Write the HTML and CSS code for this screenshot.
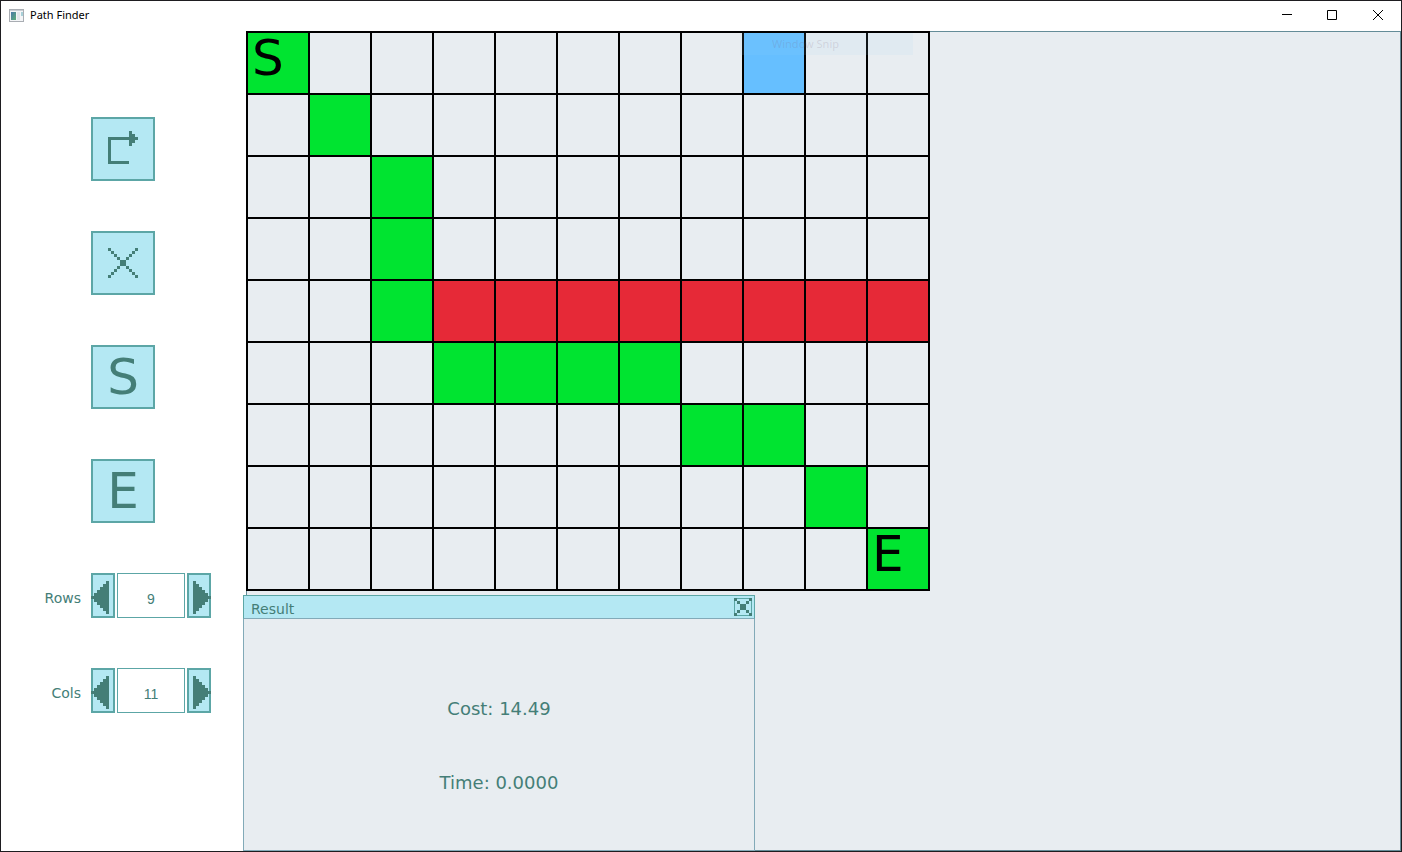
FILE: index.html
```html
<!DOCTYPE html>
<html lang="en">
<head>
<meta charset="utf-8">
<title>Path Finder</title>
<link rel="stylesheet" href="styles.css">
</head>
<body>
<div class="window">
  <header class="titlebar">
    <svg class="app-icon" viewBox="0 0 15 13" width="15" height="13" aria-hidden="true">
      <defs><linearGradient id="pane" x1="0" y1="0" x2="1" y2="1"><stop offset="0" stop-color="#4a78a8"/><stop offset="1" stop-color="#5fae78"/></linearGradient></defs>
      <rect x="0.5" y="0.5" width="14" height="12" fill="#f4f5f7" stroke="#a9adb3"/>
      <rect x="1" y="1" width="13" height="1" fill="#c9cdd3"/>
      <rect x="2" y="3" width="5" height="8" fill="url(#pane)"/>
      <rect x="8" y="3" width="3" height="8" fill="#e3e6ea"/>
      <rect x="12" y="3" width="2" height="4" fill="#a8d0d8"/>
    </svg>
    <h1 class="title">Path Finder</h1>
    <div class="window-buttons">
      <button class="window-button" type="button" aria-label="Minimize"><svg viewBox="0 0 10 10" width="10" height="10"><path d="M0 4.5H10" /></svg></button>
      <button class="window-button" type="button" aria-label="Maximize"><svg viewBox="0 0 10 10" width="10" height="10"><path d="M.5 .5H9.5V9.5H.5Z" /></svg></button>
      <button class="window-button last" type="button" aria-label="Close"><svg viewBox="0 0 10 10" width="10" height="10"><path d="M0 0L10 10M10 0L0 10" /></svg></button>
    </div>
  </header>
  <div class="content">
    <aside class="sidebar">
      <button class="tool" type="button" aria-label="Run">
        <svg class="pixel" viewBox="0 0 16 16" width="48" height="48"><path d="M3 4H10V2H11V3H12V4H13V5H12V6H11V7H10V5H4V12H10V13H3Z"/></svg>
      </button>
      <button class="tool" type="button" aria-label="Clear">
        <svg class="pixel" viewBox="0 0 16 16" width="48" height="48"><path d="M3 3h1v1h1v1h1v1h1v1h2V6h1V5h1V4h1V3h1v1h-1v1h-1v1h-1v1h-1v2h1v1h1v1h1v1h1v1h-1v-1h-1v-1h-1v-1h-1V9H7v1H6v1H5v1H4v1H3v-1h1v-1h1v-1h1V9h1V7H6V6H5V5H4V4H3Z"/></svg>
      </button>
      <button class="tool letter" type="button">S</button>
      <button class="tool letter" type="button">E</button>
      <div class="field">
        <label class="field-label" for="rows">Rows</label>
        <div class="spinner">
          <button class="step left" type="button" aria-label="Fewer rows"><svg class="pixel" viewBox="0 0 6 11" width="18" height="33"><path d="M6 0V11H5V10H4V9H3V8H2V7H1V6H0V5H1V4H2V3H3V2H4V1H5V0Z"/></svg></button>
          <input class="value" id="rows" type="text" value="9">
          <button class="step right" type="button" aria-label="More rows"><svg class="pixel" viewBox="0 0 6 11" width="18" height="33"><path d="M0 0V11H1V10H2V9H3V8H4V7H5V6H6V5H5V4H4V3H3V2H2V1H1V0Z"/></svg></button>
        </div>
      </div>
      <div class="field">
        <label class="field-label" for="cols">Cols</label>
        <div class="spinner">
          <button class="step left" type="button" aria-label="Fewer columns"><svg class="pixel" viewBox="0 0 6 11" width="18" height="33"><path d="M6 0V11H5V10H4V9H3V8H2V7H1V6H0V5H1V4H2V3H3V2H4V1H5V0Z"/></svg></button>
          <input class="value" id="cols" type="text" value="11">
          <button class="step right" type="button" aria-label="More columns"><svg class="pixel" viewBox="0 0 6 11" width="18" height="33"><path d="M0 0V11H1V10H2V9H3V8H4V7H5V6H6V5H5V4H4V3H3V2H2V1H1V0Z"/></svg></button>
        </div>
      </div>
    </aside>
    <main class="canvas">
      <div class="board">
        <i class="cell path">S</i><i class="cell"></i><i class="cell"></i><i class="cell"></i><i class="cell"></i><i class="cell"></i><i class="cell"></i><i class="cell"></i><i class="cell hover"></i><i class="cell"></i><i class="cell"></i>
        <i class="cell"></i><i class="cell path"></i><i class="cell"></i><i class="cell"></i><i class="cell"></i><i class="cell"></i><i class="cell"></i><i class="cell"></i><i class="cell"></i><i class="cell"></i><i class="cell"></i>
        <i class="cell"></i><i class="cell"></i><i class="cell path"></i><i class="cell"></i><i class="cell"></i><i class="cell"></i><i class="cell"></i><i class="cell"></i><i class="cell"></i><i class="cell"></i><i class="cell"></i>
        <i class="cell"></i><i class="cell"></i><i class="cell path"></i><i class="cell"></i><i class="cell"></i><i class="cell"></i><i class="cell"></i><i class="cell"></i><i class="cell"></i><i class="cell"></i><i class="cell"></i>
        <i class="cell"></i><i class="cell"></i><i class="cell path"></i><i class="cell wall"></i><i class="cell wall"></i><i class="cell wall"></i><i class="cell wall"></i><i class="cell wall"></i><i class="cell wall"></i><i class="cell wall"></i><i class="cell wall"></i>
        <i class="cell"></i><i class="cell"></i><i class="cell"></i><i class="cell path"></i><i class="cell path"></i><i class="cell path"></i><i class="cell path"></i><i class="cell"></i><i class="cell"></i><i class="cell"></i><i class="cell"></i>
        <i class="cell"></i><i class="cell"></i><i class="cell"></i><i class="cell"></i><i class="cell"></i><i class="cell"></i><i class="cell"></i><i class="cell path"></i><i class="cell path"></i><i class="cell"></i><i class="cell"></i>
        <i class="cell"></i><i class="cell"></i><i class="cell"></i><i class="cell"></i><i class="cell"></i><i class="cell"></i><i class="cell"></i><i class="cell"></i><i class="cell"></i><i class="cell path"></i><i class="cell"></i>
        <i class="cell"></i><i class="cell"></i><i class="cell"></i><i class="cell"></i><i class="cell"></i><i class="cell"></i><i class="cell"></i><i class="cell"></i><i class="cell"></i><i class="cell"></i><i class="cell path">E</i>
      </div>
      <div class="fading-menu">Window Snip</div>
      <section class="result" aria-labelledby="result-title">
        <header class="result-bar">
          <h2 class="result-title" id="result-title">Result</h2>
          <button class="result-close" type="button" aria-label="Close result"><svg class="pixel" viewBox="0 0 6 6" width="18" height="18"><path d="M0 0h1v1h1v1h2V1h1V0h1v1H5v1H4v2h1v1h1v1H5V5H4V4H2v1H1v1H0V5h1V4h1V2H1V1H0Z"/></svg></button>
        </header>
        <div class="result-body">
          <p class="result-line">Cost: 14.49</p>
          <p class="result-line">Time: 0.0000</p>
        </div>
      </section>
    </main>
  </div>
</div>
</body>
</html>
```
FILE: styles.css
```css
* {
  box-sizing: border-box;
}

body {
  margin: 0;
  font-family: "DejaVu Sans", sans-serif;
  font-size: 14px;
  color: #447e77;
}

button {
  margin: 0;
  padding: 0;
  border: 0;
  background: none;
  color: inherit;
  font-family: inherit;
}

svg {
  display: block;
}

.window {
  display: flex;
  flex-direction: column;
  min-height: 100vh;
  border: 1px solid #1e1d20;
  background: #fff;
}

.titlebar {
  display: flex;
  align-items: center;
  height: 30px;
  padding-bottom: 2px;
  padding-left: 8px;
  gap: 6px;
}

.title {
  margin: 0;
  flex: 1;
  font: 400 11px/16px "Noto Sans", sans-serif;
  color: #000;
}

.window-buttons {
  display: flex;
}

.window-button {
  display: grid;
  place-items: center;
  width: 45px;
  height: 28px;
}

.window-button.last {
  width: 47px;
}

.window-button path {
  fill: none;
  stroke: #000;
}

.content {
  display: flex;
  flex: 1;
}

.sidebar {
  display: flex;
  flex-direction: column;
  gap: 50px;
  width: 245px;
  padding-top: 86px;
  padding-left: 90px;
}

.tool {
  display: grid;
  place-items: center;
  width: 64px;
  height: 64px;
  border: 2px solid #5ca6a6;
  background: #b4e8f3;
}

.letter {
  font-size: 50px;
  line-height: 60px;
}

.pixel {
  fill: #447e77;
  shape-rendering: crispEdges;
}

.field {
  display: flex;
  align-items: center;
  gap: 10px;
  margin-left: -60px;
}

.field-label {
  width: 50px;
  text-align: right;
  line-height: 20px;
  padding-top: 4px;
}

.spinner {
  display: flex;
  gap: 2px;
}

.step {
  display: flex;
  width: 24px;
  height: 45px;
  padding-top: 8px;
  background: #b4e8f3;
  box-shadow: inset 0 0 0 2px #5ca6a6;
}

.step.right {
  justify-content: flex-end;
}

.value {
  width: 68px;
  height: 45px;
  padding: 6px 0 0;
  border: 1px solid #5ca6a6;
  border-radius: 0;
  background: #fff;
  color: inherit;
  font: 14px/20px "Liberation Sans", sans-serif;
  text-align: center;
}

.canvas {
  position: relative;
  flex: 1;
  background: #e8edf1;
  box-shadow: inset 0 0 0 1px #648c98;
}

.board {
  display: grid;
  grid-template-columns: repeat(11, 60px);
  grid-auto-rows: 60px;
  gap: 2px;
  width: max-content;
  padding: 2px;
  background: #000;
}

.cell {
  padding-left: 4px;
  background: #e8edf1;
  color: #000;
  font-size: 50px;
  font-style: normal;
  line-height: 50px;
}

.path {
  background: #00e430;
}

.wall {
  background: #e62937;
}

.hover {
  background: #66bfff;
}

/* Menu caught part-way through its fade-out */
.fading-menu {
  position: absolute;
  top: 2px;
  left: 494px;
  width: 173px;
  padding-left: 32px;
  background: rgba(160, 220, 250, 0.1);
  color: rgba(120, 90, 120, 0.18);
  font: 11px/22px "Noto Sans", sans-serif;
}

/* Floating window over the canvas */
.result {
  position: absolute;
  top: 564px;
  bottom: 0;
  left: -3px;
  width: 512px;
  border: 1px solid #82aab8;
  border-top: 0;
  background: #e8edf1;
}

.result-bar {
  display: flex;
  align-items: center;
  justify-content: space-between;
  height: 24px;
  margin: 0 -1px;
  padding: 0 2px 0 7px;
  border: 1px solid #5ca6a6;
  border-bottom-color: #82aab8;
  background: #b4e8f3;
}

.result-title {
  margin: 0;
  padding-top: 4px;
  font-size: 14px;
  font-weight: 400;
  line-height: 18px;
}

.result-close {
  box-shadow: inset 0 0 0 1px #5ca6a6;
}

.result-body {
  display: flex;
  flex-direction: column;
  gap: 50px;
  padding-top: 78px;
  text-align: center;
}

.result-line {
  margin: 0;
  font-size: 18px;
  line-height: 24px;
}
```
